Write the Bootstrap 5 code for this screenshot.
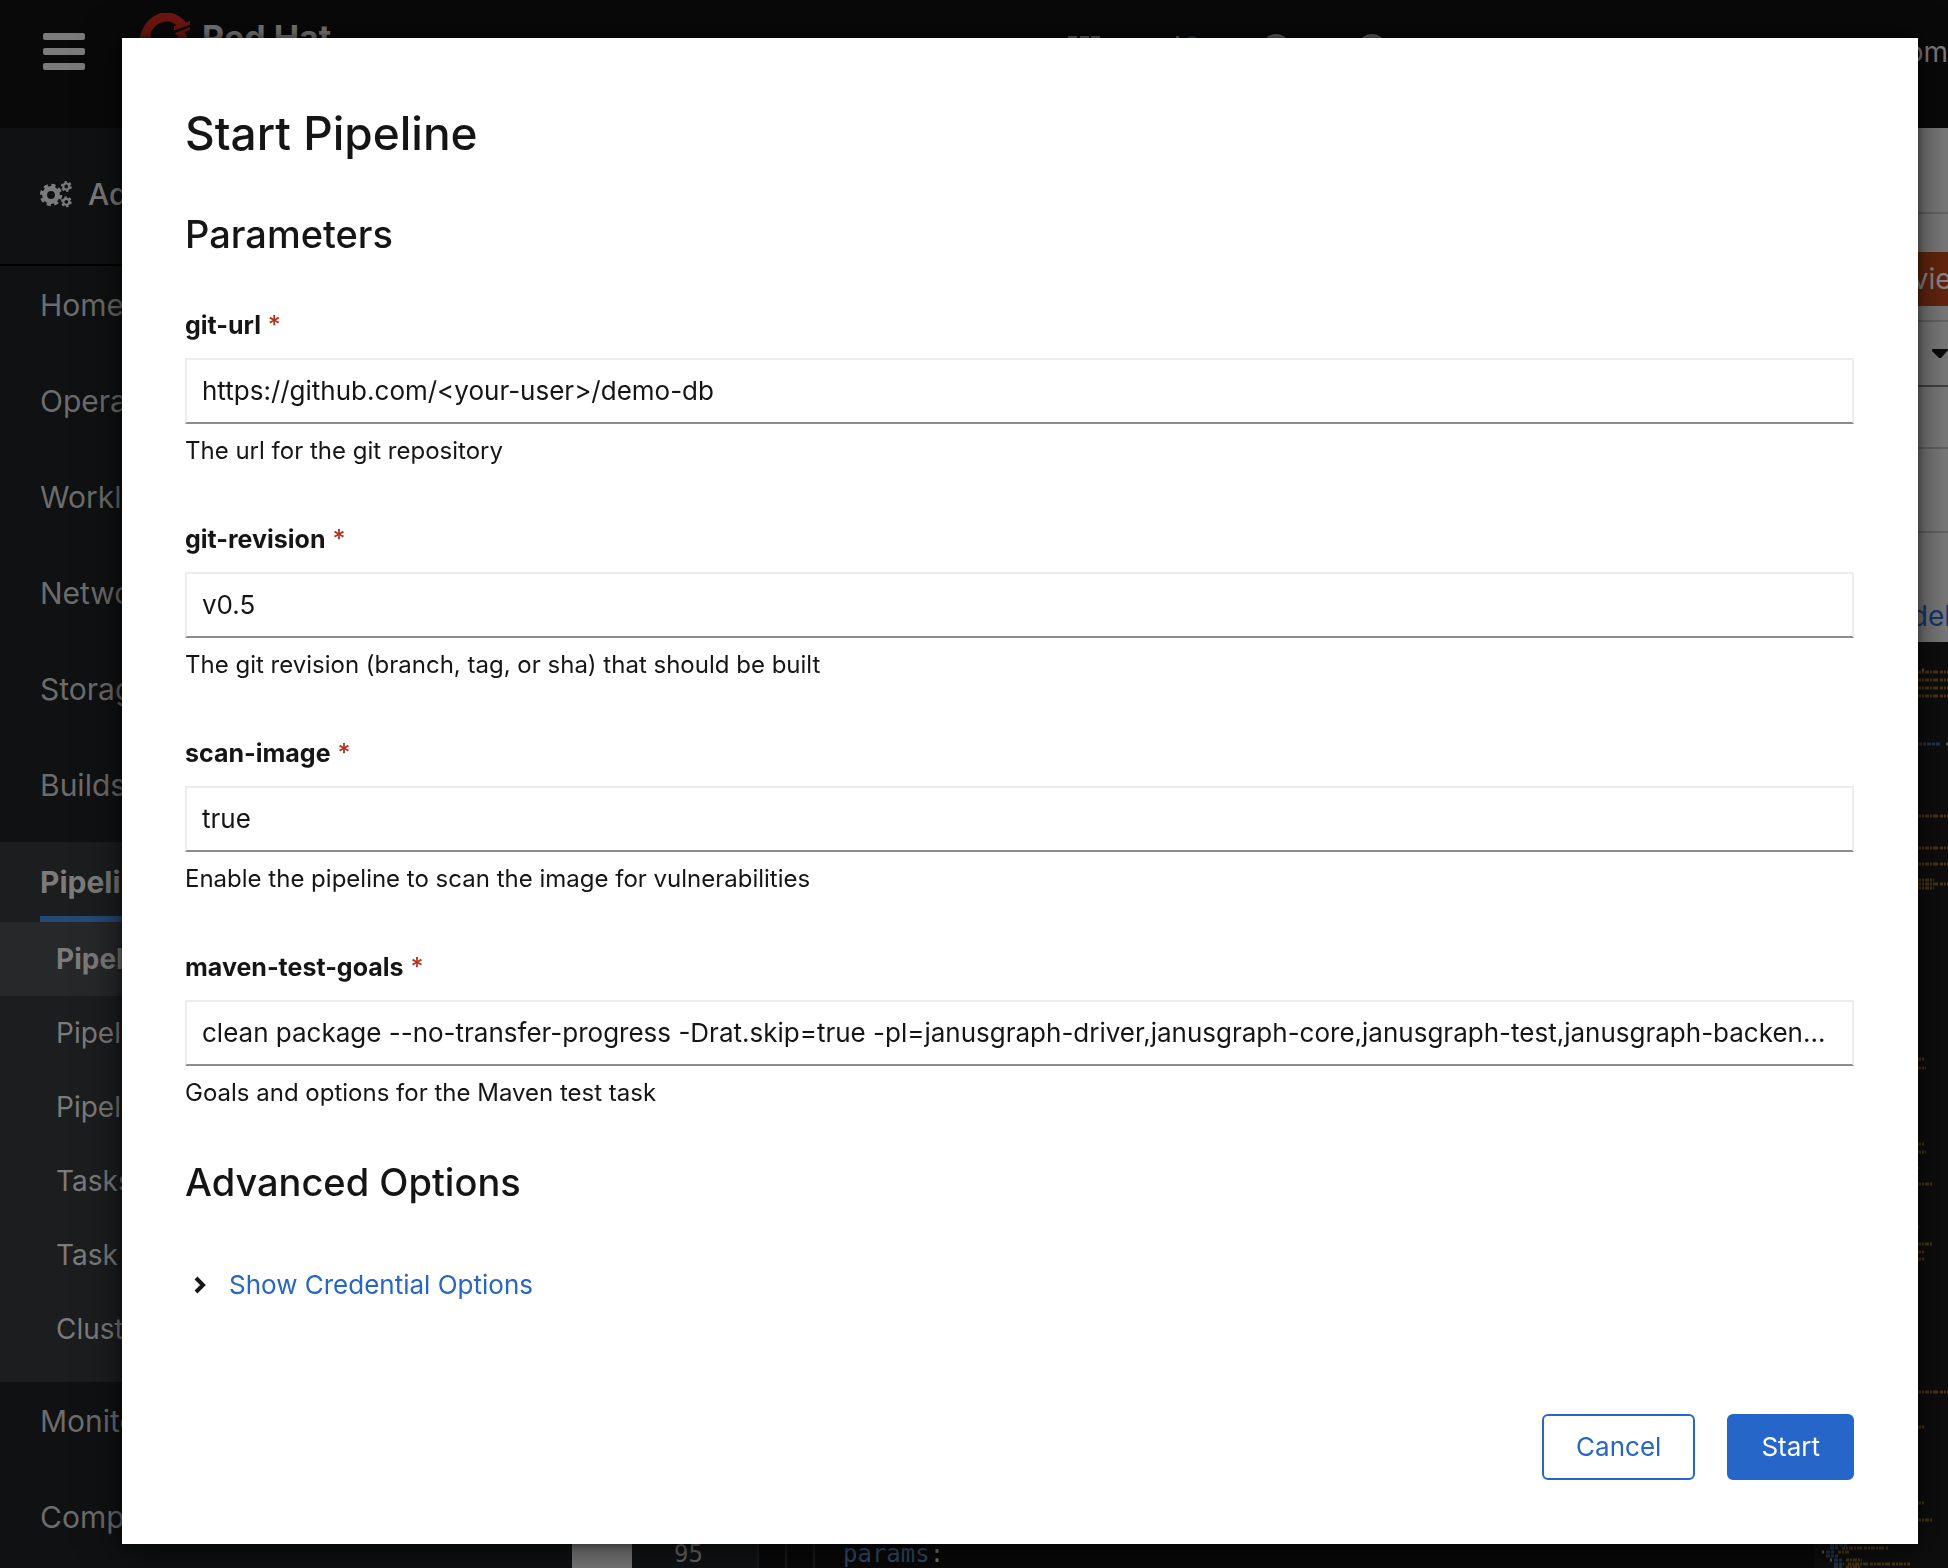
<!DOCTYPE html>
<html lang="en">
<head>
<meta charset="utf-8">
<meta name="viewport" content="width=device-width, initial-scale=1">
<title>Start Pipeline</title>
<link href="https://cdn.jsdelivr.net/npm/bootstrap@5.3.0/dist/css/bootstrap.min.css" rel="stylesheet">
<style>
body { font-family: Inter, "Liberation Sans", sans-serif; color: #151515; background: #0a0a0a; }
a { text-decoration: none; }

/* dimmed console behind the dialog */
.console { height: 100vh; }
.masthead { height: 128px; padding-bottom: 24px; background: #090909; color: #7b7b7b; }
.menu-toggle { padding: 0 53px 0 43px; color: #7b7b7b; background: none; border: 0; }
.brand-name { font-size: 34px; line-height: 34px; font-weight: 700; }
.brand-product { font-size: 28px; line-height: 28px; }
.tool-btn { width: 96px; padding: 0; color: #656565; background: none; border: 0; }
.user-name { width: 528px; font-size: 28px; }
.sidebar { width: 572px; background: #0f1112; color: #6c6c6c; font-size: 30px; line-height: 40px; }
.sidebar a { color: inherit; }
.perspective { height: 138px; padding: 0 40px 4px; gap: 16px; border-bottom: 2px solid #000; color: #7b7b7b; font-weight: 500; }
.nav-top { padding: 19px 40px 21px; margin-bottom: 16px; }
.nav-open { background: #1c1d1f; padding-bottom: 16px; color: #7b7b7b; }
.nav-open-head { padding: 20px 40px 0; height: 80px; font-weight: 700; }
.nav-open-head span { height: 60px; border-bottom: 6px solid #254a76; }
.nav-sub { padding: 17px 56px; font-size: 28px; }
.nav-sub.current { background: #27282a; font-weight: 700; }
.workarea { background: #7b7b7b; }
.strip { border-bottom: 2px solid #656565; }
.strip-project { height: 86px; }
.strip-title { height: 108px; padding-top: 24px; }
.strip-select { height: 65px; border-bottom-color: #434343; }
.strip-tabs { height: 62px; }
.strip-sub { height: 84px; }
.strip-help { height: 109px; padding-top: 65px; font-size: 28px; line-height: 36px; }
.strip-help a { color: #15386f; margin-right: -40px; }
.preview-tag { background: #65260f; color: #8c8c8c; font-size: 28px; line-height: 54px; padding: 0 16px; margin-right: -42px; }
.editor { margin-left: 60px; background: #090909; font: 24px/28px "DejaVu Sans Mono", monospace; }
.line-no { width: 127px; background: #111214; padding-right: 54px; color: #666; border-right: 2px solid #1a1a1a; }
.indent { width: 28px; border-right: 2px solid #1a1a1a; }
.code-key { padding-left: 28px; color: #2f4a66; }
.minimap { width: 134px; background: #0e0e0e; }

/* dialog */
.pipeline-dialog { margin: 38px 30px 24px 122px; max-width: none; }
.pipeline-dialog .modal-content { border: 0; border-radius: 0; padding: 64px 64px 64px 63px; color: #151515; box-shadow: 0 4px 36px rgba(0,0,0,.65), 0 0 8px rgba(0,0,0,.4); }
.dialog-title { font-size: 46px; line-height: 62px; font-weight: 500; margin: 0 0 45px; }
.section-title { font-size: 38px; line-height: 50px; font-weight: 500; margin: 0; }
.param-list { display: grid; gap: 52px; padding: 48px 0 46px; }
.param-list .form-label { display: block; font-size: 25px; line-height: 36px; font-weight: 700; margin: 0 0 15px; }
.req { color: #b5301f; font-weight: 500; padding-left: 1px; }
.param-list .form-control { height: 66px; border: 2px solid #ededed; border-bottom-color: #8a8d90; border-radius: 0; padding: 0 15px 2px; font-size: 26px; color: #151515; text-overflow: ellipsis; }
.param-list .form-text { font-size: 24px; line-height: 36px; margin: 9px 0 0; color: #151515; }
.expander { font-size: 26px; line-height: 40px; color: #2666c8; margin: 58px 0 109px; padding: 0 0 0 9px; gap: 23px; background: none; border: 0; }
.dialog-actions { gap: 32px; }
.dialog-actions .btn { font-size: 26px; line-height: 36px; padding: 13px 32px; border: 2px solid #2666c8; border-radius: 6px; color: #2666c8; }
.dialog-actions .btn-start { background: #2666c8; color: #fff; }
</style>
<script src="https://cdn.jsdelivr.net/npm/bootstrap@5.3.0/dist/js/bootstrap.bundle.min.js"></script>
</head>
<body class="overflow-hidden">
<div class="console d-flex flex-column overflow-hidden">
  <header class="masthead d-flex align-items-center flex-shrink-0">
    <button class="menu-toggle d-flex" type="button" aria-label="Menu">
      <svg width="43" height="38" viewBox="0 0 43 38" fill="currentColor"><rect width="42" height="7" y="0" rx="2"/><rect width="42" height="7" y="15" rx="2"/><rect width="42" height="7" y="30" rx="2"/></svg>
    </button>
    <div class="d-flex align-items-center">
      <svg width="63" height="78" viewBox="0 0 63 78" fill="none"><path d="M5 40C0 10 28-8 44 13" stroke="#711710" stroke-width="9"/><path d="M41 19Q46 26 45 36Q42 50 26 52Q14 51 10 42" stroke="#711710" stroke-width="8"/><path d="M35 13l16-5v4l-16 6zM36 20l15-6v3l-14 5zM0 25l12-4v6l-12 4z" fill="#711710"/><path d="M34 18l17-6v2l-17 6z" fill="#090909"/></svg>
      <div><div class="brand-name">Red Hat</div><div class="brand-product">OpenShift</div></div>
    </div>
    <div class="d-flex ms-auto flex-shrink-0">
      <button class="tool-btn" type="button" aria-label="Applications"><svg width="32" height="32" viewBox="0 0 32 32" fill="currentColor"><path d="M0 0h9v9H0zM12 0h9v9h-9zM23 0h9v9h-9zM0 12h9v9H0zM12 12h9v9h-9zM23 12h9v9h-9zM0 23h9v9H0zM12 23h9v9h-9zM23 23h9v9h-9z"/></svg></button>
      <button class="tool-btn" type="button" aria-label="Notifications"><svg width="36" height="32" viewBox="0 0 36 32"><path d="M14 0h3v3q8 1 8 11v8l3 4H3l3-4v-8Q6 4 14 3z" fill="currentColor"/><circle cx="30" cy="8" r="8" fill="#1b3a60"/></svg></button>
      <button class="tool-btn" type="button" aria-label="Add"><svg width="28" height="36" viewBox="0 0 28 36"><circle cx="14" cy="14" r="14" fill="currentColor"/><path d="M6 14h16M14 6v16" stroke="#090909" stroke-width="4"/></svg></button>
      <button class="tool-btn" type="button" aria-label="Help"><svg width="28" height="36" viewBox="0 0 28 36"><circle cx="14" cy="14" r="14" fill="currentColor"/><path d="M10 11q0-5 4-5t4 4-4 5v3M14 20v3" stroke="#090909" stroke-width="3" fill="none"/></svg></button>
    </div>
    <div class="user-name text-end flex-shrink-0">admin@example.com</div>
  </header>
  <div class="d-flex flex-grow-1 overflow-hidden">
    <nav class="sidebar flex-shrink-0" aria-label="Main">
      <div class="perspective d-flex align-items-center">
        <svg width="32" height="27" viewBox="0 0 32 27" fill="none" stroke="currentColor"><circle cx="11" cy="14" r="6.4" stroke-width="5"/><circle cx="11" cy="14" r="9.4" stroke-width="3.6" stroke-dasharray="4.1 3.28"/><circle cx="26.300" cy="5.500" r="3" stroke-width="2.200"/><circle cx="26.300" cy="5.500" r="4.600" stroke-width="1.800" stroke-dasharray="2.400 2.400"/><circle cx="26.300" cy="20.800" r="3" stroke-width="2.200"/><circle cx="26.300" cy="20.800" r="4.600" stroke-width="1.800" stroke-dasharray="2.400 2.400"/></svg>
        Administrator
      </div>
      <a class="nav-top d-block" href="#">Home</a>
      <a class="nav-top d-block" href="#">Operators</a>
      <a class="nav-top d-block" href="#">Workloads</a>
      <a class="nav-top d-block" href="#">Networking</a>
      <a class="nav-top d-block" href="#">Storage</a>
      <a class="nav-top d-block" href="#">Builds</a>
      <div class="nav-open">
        <a class="nav-open-head d-block" href="#"><span class="d-block">Pipelines</span></a>
        <a class="nav-sub current d-block" href="#">Pipelines</a>
        <a class="nav-sub d-block" href="#">PipelineRuns</a>
        <a class="nav-sub d-block" href="#">PipelineResources</a>
        <a class="nav-sub d-block" href="#">Tasks</a>
        <a class="nav-sub d-block" href="#">Task Runs</a>
        <a class="nav-sub d-block" href="#">ClusterTasks</a>
      </div>
      <a class="nav-top d-block" href="#">Monitoring</a>
      <a class="nav-top d-block" href="#">Compute</a>
    </nav>
    <main class="workarea d-flex flex-column flex-grow-1 overflow-hidden">
      <div class="strip strip-project"></div>
      <div class="strip strip-title d-flex align-items-center justify-content-end"><span class="preview-tag">Tech preview</span></div>
      <div class="strip strip-select d-flex align-items-center justify-content-end"><svg width="16" height="10" viewBox="0 0 16 10"><path d="M0 1Q0 0 1 0H16V1L9 9H7L0 2z" fill="#0a0a0a"/></svg></div>
      <div class="strip strip-tabs"></div>
      <div class="strip strip-sub"></div>
      <div class="strip-help text-end"><a href="#">View sidebar</a></div>
      <div class="editor d-flex flex-grow-1">
        <div class="d-flex flex-grow-1">
          <div class="line-no d-flex align-items-end justify-content-end">95</div>
          <div class="indent"></div><div class="indent"></div>
          <div class="code-key d-flex align-items-end">params<span class="text-secondary">:</span></div>
        </div>
        <svg class="minimap" viewBox="0 0 134 926" preserveAspectRatio="xMaxYMin slice" fill="none" stroke-width="3">
          <g stroke="#4a3612" stroke-dasharray="3 1 2 1 4 1 2 1 5 2">
            <path d="M104 30H134M104 38H134M104 46H134M104 54H134M104 174H134M104 206H134M104 222H134M104 238H120M104 242H134M104 246H120M104 417H110M104 426H112M104 502H110M104 510H112M104 526H105M104 542H118M104 585H105M104 602H118M104 610H110M104 617H110M104 750H134M104 785H110M104 861H110M104 878H118"/>
            <path d="M28 906H74M24 910H36M32 918H48M34 922H96M32 925H46"/>
          </g>
          <g stroke="#20354b" stroke-dasharray="4 1 3 1">
            <path d="M104 102H126M16 903H34M16 906H24M12 910H20M12 914H24M20 918H28M20 922H30M20 925H28"/>
          </g>
          <path d="M108 28H110M132 102H134M8 910H10M16 918H18" stroke="#555"/>
        </svg>
      </div>
    </main>
  </div>
</div>

<div class="modal d-block" tabindex="-1" role="dialog" aria-modal="true" aria-labelledby="dlg-title">
  <div class="modal-dialog pipeline-dialog">
    <form class="modal-content">
      <h1 class="dialog-title" id="dlg-title">Start Pipeline</h1>
      <h2 class="section-title">Parameters</h2>
      <div class="param-list">
        <div>
          <label class="form-label" for="git-url">git-url <span class="req">*</span></label>
          <input class="form-control" id="git-url" type="text" value="https://github.com/&lt;your-user&gt;/demo-db" required>
          <div class="form-text">The url for the git repository</div>
        </div>
        <div>
          <label class="form-label" for="git-revision">git-revision <span class="req">*</span></label>
          <input class="form-control" id="git-revision" type="text" value="v0.5" required>
          <div class="form-text">The git revision (branch, tag, or sha) that should be built</div>
        </div>
        <div>
          <label class="form-label" for="scan-image">scan-image <span class="req">*</span></label>
          <input class="form-control" id="scan-image" type="text" value="true" required>
          <div class="form-text">Enable the pipeline to scan the image for vulnerabilities</div>
        </div>
        <div>
          <label class="form-label" for="maven-test-goals">maven-test-goals <span class="req">*</span></label>
          <input class="form-control" id="maven-test-goals" type="text" value="clean package --no-transfer-progress -Drat.skip=true -pl=janusgraph-driver,janusgraph-core,janusgraph-test,janusgraph-backen..." required>
          <div class="form-text">Goals and options for the Maven test task</div>
        </div>
      </div>
      <h2 class="section-title">Advanced Options</h2>
      <button class="expander d-flex align-items-center" type="button">
        <svg width="12" height="18" viewBox="0 0 12 18" fill="none" stroke="#151515" stroke-width="4"><path d="M2 2l7 7-7 7"/></svg>
        Show Credential Options
      </button>
      <div class="dialog-actions d-flex justify-content-end">
        <button class="btn" type="button">Cancel</button>
        <button class="btn btn-start" type="submit">Start</button>
      </div>
    </form>
  </div>
</div>
</body>
</html>
